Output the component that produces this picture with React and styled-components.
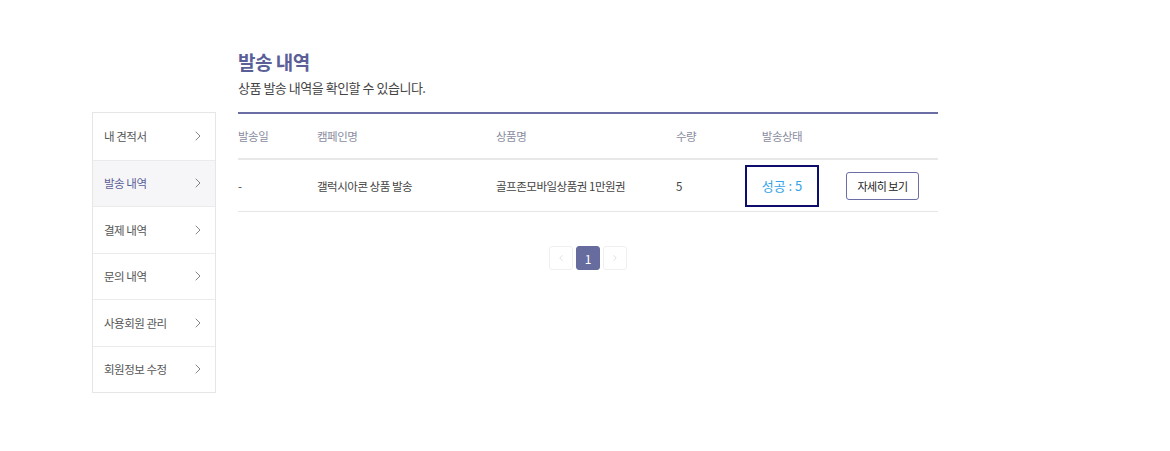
import React from 'react';
import styled, { createGlobalStyle } from 'styled-components';
import { ChevronRight, ChevronLeft } from 'lucide-react';

const GlobalStyle = createGlobalStyle`
  html, body { margin: 0; padding: 0; background: #fff; }
  body {
    font-family: "Noto Sans CJK KR", "Noto Sans", sans-serif;
    color: #444;
    letter-spacing: -0.03em;
  }
`;

// page frame: sidebar + main content
const Page = styled.div`
  display: flex;
  align-items: flex-start;
  gap: 22px;
  padding: 49px 0 0 92px;
  width: 1170px;
  height: 451px;
  box-sizing: border-box;
`;

const Sidebar = styled.ul`
  list-style: none;
  margin: 63px 0 0;
  padding: 0;
  width: 124px;
  box-sizing: border-box;
  border: 1px solid #e6e6e6;
`;

const MenuItem = styled.li`
  display: flex;
  align-items: center;
  justify-content: space-between;
  height: 46.5px;
  box-sizing: border-box;
  padding: 0 11px;
  font-size: 11.5px;
  color: ${p => (p.active ? '#5b5f97' : '#555')};
  background: ${p => (p.active ? '#f6f6f9' : '#fff')};
  border-top: ${p => (p.first ? 'none' : '1px solid #ebebeb')};
  svg { color: #666; margin-right: -2px; }
`;

const Main = styled.div`
  width: 700px;
`;

const Title = styled.h2`
  margin: 0;
  font-size: 19px;
  line-height: 26px;
  font-weight: 700;
  color: #5b5f97;
`;

const Subtitle = styled.p`
  margin: 3px 0 14px;
  font-size: 13px;
  line-height: 20px;
  color: #444;
`;

const Table = styled.div`
  border-top: 2px solid #6a6ea5;
`;

const Row = styled.div`
  display: grid;
  grid-template-columns: 79px 179px 180px 69px 74px 1fr;
  align-items: center;
  height: ${p => (p.head ? '44px' : '51px')};
  border-bottom: ${p => (p.head ? '2px solid #e8e8e8' : '1px solid #e6e6e6')};
  font-size: 11.5px;
  color: ${p => (p.head ? '#8a8ca0' : '#444')};
`;

const Cell = styled.div`
  text-align: ${p => (p.center ? 'center' : 'left')};
  white-space: nowrap;
`;

const StatusBox = styled.div`
  height: 42px;
  border: 2px solid #0d0d6b;
  box-sizing: border-box;
  display: flex;
  align-items: center;
  justify-content: center;
  font-size: 13px;
  letter-spacing: 0;
  color: #35a4e6;
`;

const DetailButton = styled.button`
  margin-left: 27px;
  width: 73px;
  height: 28px;
  border: 1px solid #6a6ea5;
  border-radius: 3px;
  background: #fff;
  font-family: inherit;
  letter-spacing: inherit;
  font-size: 11px;
  color: #222;
  padding: 0;
`;

const Pager = styled.div`
  display: flex;
  justify-content: center;
  gap: 3px;
  margin-top: 34px;
`;

const PageBtn = styled.div`
  width: 24px;
  height: 24px;
  box-sizing: border-box;
  display: flex;
  align-items: center;
  justify-content: center;
  border-radius: 3px;
  font-size: 12px;
  letter-spacing: 0;
  border: 1px solid ${p => (p.active ? '#676c9f' : '#efefef')};
  background: ${p => (p.active ? '#676c9f' : '#fff')};
  color: ${p => (p.active ? '#fff' : '#ccc')};
`;

const menu = ['내 견적서', '발송 내역', '결제 내역', '문의 내역', '사용회원 관리', '회원정보 수정'];

export default function App() {
  return (
    <>
      <GlobalStyle />
      <Page>
        <Sidebar>
          {menu.map((m, i) => (
            <MenuItem key={m} first={i === 0} active={i === 1}>
              {m}
              <ChevronRight size={16} strokeWidth={1.2} />
            </MenuItem>
          ))}
        </Sidebar>

        <Main>
          <Title>발송 내역</Title>
          <Subtitle>상품 발송 내역을 확인할 수 있습니다.</Subtitle>

          <Table>
            <Row head>
              <Cell>발송일</Cell>
              <Cell>캠페인명</Cell>
              <Cell>상품명</Cell>
              <Cell>수량</Cell>
              <Cell center>발송상태</Cell>
              <Cell />
            </Row>
            <Row>
              <Cell>-</Cell>
              <Cell>갤럭시아콘 상품 발송</Cell>
              <Cell>골프존모바일상품권 1만원권</Cell>
              <Cell>5</Cell>
              <StatusBox>성공 : 5</StatusBox>
              <Cell><DetailButton>자세히 보기</DetailButton></Cell>
            </Row>
          </Table>

          <Pager>
            <PageBtn><ChevronLeft size={10} strokeWidth={1.5} /></PageBtn>
            <PageBtn active>1</PageBtn>
            <PageBtn><ChevronRight size={10} strokeWidth={1.5} /></PageBtn>
          </Pager>
        </Main>
      </Page>
    </>
  );
}
